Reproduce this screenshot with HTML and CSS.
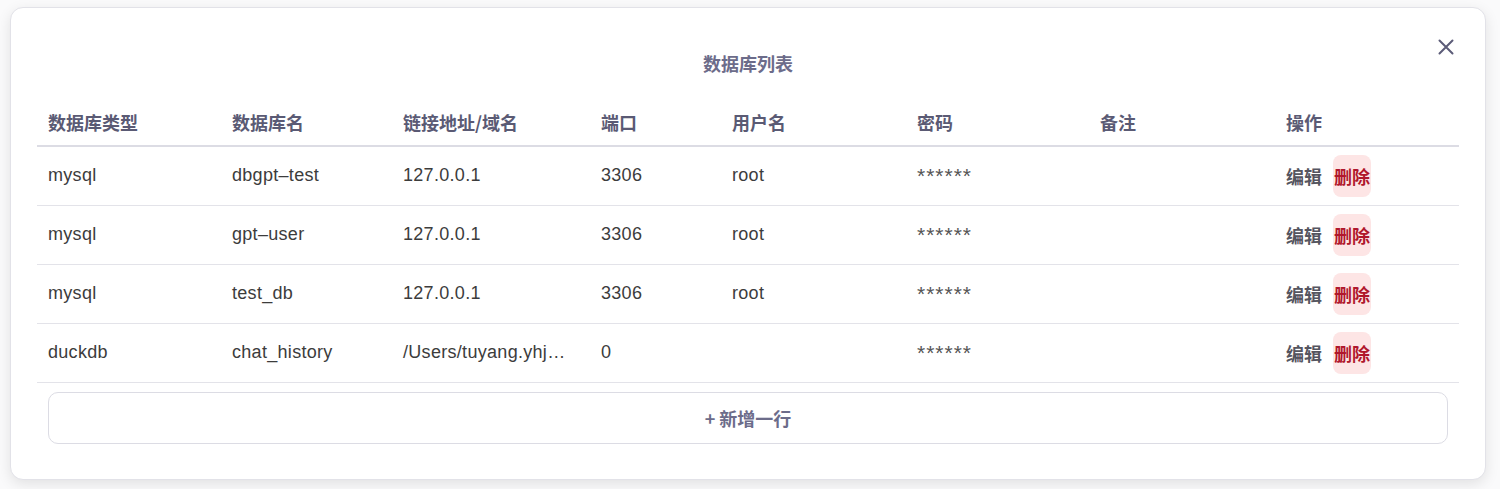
FILE: index.html
```html
<!DOCTYPE html>
<html lang="zh">
<head>
<meta charset="utf-8">
<title>数据库列表</title>
<link rel="stylesheet" href="styles.css">
</head>
<body>
<div class="modal">
  <button class="close" aria-label="close">
    <svg width="16" height="16" viewBox="0 0 16 16"><path d="M1.5 1.5 L14.5 14.5 M14.5 1.5 L1.5 14.5" stroke="#5c5c78" stroke-width="2" stroke-linecap="round" fill="none"/></svg>
  </button>
  <div class="title">数据库列表</div>
  <table class="db-table">
    <colgroup>
      <col style="width:184px"><col style="width:171px"><col style="width:198px"><col style="width:131px">
      <col style="width:185px"><col style="width:183px"><col style="width:186px"><col style="width:184px">
    </colgroup>
    <thead>
      <tr><th>数据库类型</th><th>数据库名</th><th>链接地址/域名</th><th>端口</th><th>用户名</th><th>密码</th><th>备注</th><th>操作</th></tr>
    </thead>
    <tbody>
      <tr><td>mysql</td><td>dbgpt–test</td><td>127.0.0.1</td><td>3306</td><td>root</td><td class="pw">******</td><td></td><td><div class="ops"><span class="edit">编辑</span><span class="del">删除</span></div></td></tr>
      <tr><td>mysql</td><td>gpt–user</td><td>127.0.0.1</td><td>3306</td><td>root</td><td class="pw">******</td><td></td><td><div class="ops"><span class="edit">编辑</span><span class="del">删除</span></div></td></tr>
      <tr><td>mysql</td><td>test_db</td><td>127.0.0.1</td><td>3306</td><td>root</td><td class="pw">******</td><td></td><td><div class="ops"><span class="edit">编辑</span><span class="del">删除</span></div></td></tr>
      <tr><td>duckdb</td><td>chat_history</td><td>/Users/tuyang.yhj…</td><td>0</td><td></td><td class="pw">******</td><td></td><td><div class="ops"><span class="edit">编辑</span><span class="del">删除</span></div></td></tr>
    </tbody>
  </table>
  <button class="add-row">+ 新增一行</button>
</div>
</body>
</html>
```
FILE: styles.css
```css
* { box-sizing: border-box; }
html, body { margin: 0; padding: 0; background: #fafafb; }
body {
  font-family: "Liberation Sans", "Noto Sans CJK SC", sans-serif;
  width: 1500px;
  height: 489px;
  overflow: hidden;
  padding-top: 7px;
}
.modal {
  position: relative;
  margin-left: 10px;
  width: 1476px;
  height: 473px;
  background: #fff;
  border: 1px solid #e2e2e8;
  border-radius: 13px;
  box-shadow: 0 4px 14px rgba(0, 0, 0, 0.10);
  padding: 43px 26px 0 26px;
}
.close {
  position: absolute;
  top: 31px;
  right: 31px;
  width: 16px;
  height: 16px;
  padding: 0;
  border: 0;
  background: none;
  display: flex;
}
.title {
  text-align: center;
  font-size: 18px;
  line-height: 24px;
  font-weight: 700;
  color: #6c6c8a;
  font-family: "Noto Sans CJK SC", sans-serif;
}
.db-table {
  margin-top: 23px;
  width: 1422px;
  border-collapse: collapse;
  table-layout: fixed;
}
.db-table th {
  height: 48px;
  padding: 0 11px;
  text-align: left;
  font-size: 18px;
  font-weight: 700;
  color: #5a5a74;
  font-family: "Noto Sans CJK SC", sans-serif;
  border-bottom: 2px solid #dcdce4;
  vertical-align: middle;
}
.db-table td {
  height: 59px;
  padding: 0 11px;
  font-size: 18px;
  letter-spacing: 0.3px;
  color: #3c3c3c;
  border-bottom: 1px solid #e3e3e9;
  vertical-align: middle;
  white-space: nowrap;
  overflow: hidden;
}
.db-table td.pw {
  font-size: 21px;
  letter-spacing: 1px;
  color: #555;
  padding-top: 0;
}
.ops {
  display: flex;
  align-items: center;
  gap: 11px;
}
.edit {
  font-family: "Noto Sans CJK SC", sans-serif;
  font-weight: 700;
  font-size: 18px;
  letter-spacing: 0;
  color: #555560;
}
.del {
  font-family: "Noto Sans CJK SC", sans-serif;
  font-weight: 700;
  font-size: 18px;
  letter-spacing: 0;
  color: #b0172c;
  background: #fde5e5;
  border-radius: 8px;
  height: 42px;
  padding: 0 1px;
  display: flex;
  align-items: center;
}
.add-row {
  display: block;
  margin: 9px 11px 0 11px;
  width: 1400px;
  height: 52px;
  border: 1px solid #dcdce4;
  border-radius: 10px;
  background: #fff;
  font-family: "Noto Sans CJK SC", sans-serif;
  font-size: 18px;
  font-weight: 700;
  color: #6c6c8a;
}
```
